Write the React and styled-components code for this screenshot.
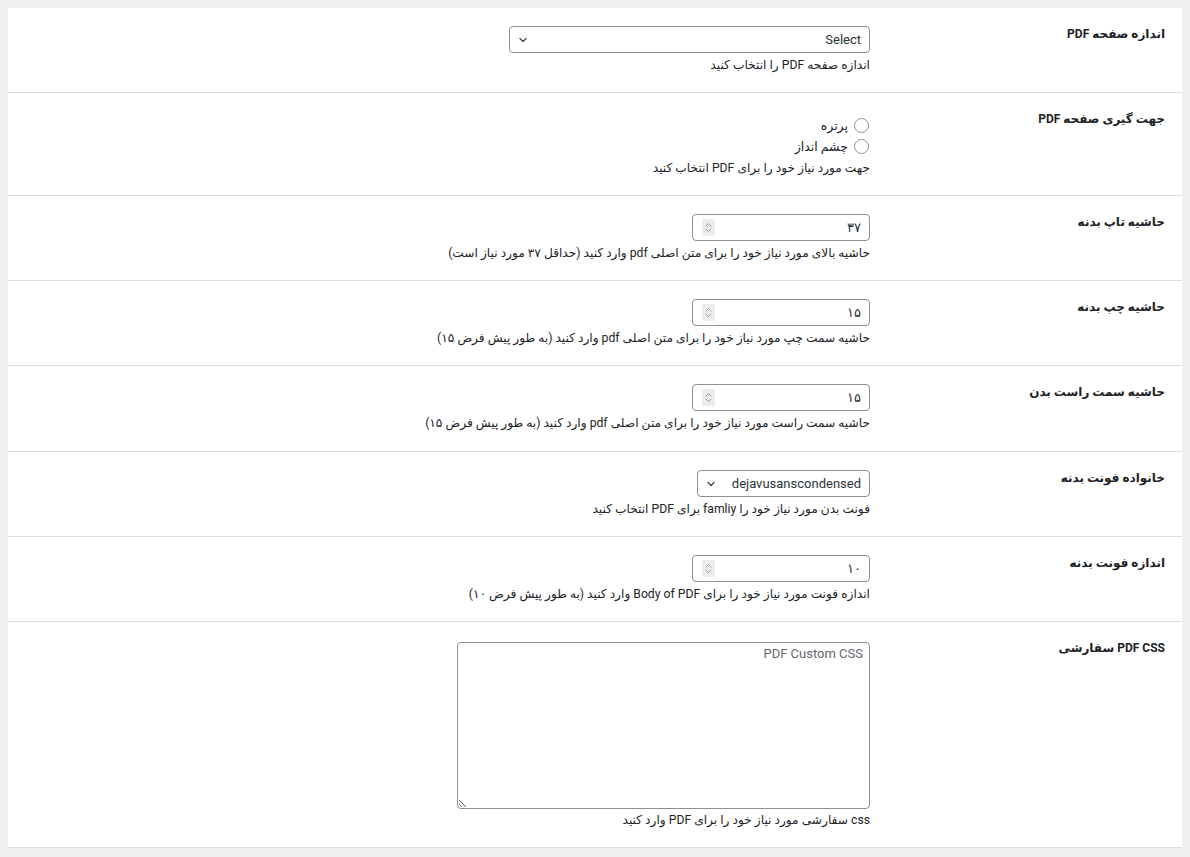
import React from 'react';
import styled, { createGlobalStyle } from 'styled-components';

const GlobalStyle = createGlobalStyle`
  html, body {
    margin: 0;
    padding: 0;
    background: #f0f0f1;
  }
  body {
    padding: 8px;
    font-family: Roboto, "DejaVu Sans", sans-serif;
    color: #1d2327;
  }
`;

const Panel = styled.div`
  direction: rtl;
  background: #fff;
`;

const Row = styled.div`
  display: grid;
  grid-template-columns: 302px 1fr;
  border-bottom: 1px solid #dcdcde;
`;

const Label = styled.div`
  padding: 17px 17px 0 0;
  font-size: 12px;
  font-weight: 700;
  line-height: 18px;
  color: #1d2327;
`;

const Field = styled.div`
  padding: ${(p) => p.$top || 18}px 10px ${(p) => p.$bottom || 17}px 10px;
  display: flex;
  flex-direction: column;
  align-items: flex-start;
`;

const Description = styled.p`
  margin: ${(p) => p.$gap || 2}px 0 0;
  font-size: 12.2px;
  line-height: 20px;
  color: #1d2327;
`;

const SelectBox = styled.div`
  box-sizing: border-box;
  width: ${(p) => p.$width}px;
  height: 27px;
  border: 1px solid #8c8f94;
  border-radius: 4px;
  display: flex;
  align-items: center;
  justify-content: space-between;
  padding: 0 8px;
  font-size: 13px;
  color: #2c3338;
  background: #fff;
`;

const NumberBox = styled.div`
  box-sizing: border-box;
  width: 178px;
  height: 27px;
  border: 1px solid #8c8f94;
  border-radius: 4px;
  display: flex;
  align-items: center;
  justify-content: space-between;
  padding: 0 8px 0 9px;
  background: #fff;
`;

const NumberValue = styled.span`
  font-size: 13px;
  color: #2c3338;
`;

const Spinner = styled.span`
  width: 13px;
  height: 17px;
  background: #ececec;
  border-radius: 2px;
  display: flex;
  align-items: center;
  justify-content: center;
`;

const RadioList = styled.div`
  margin-top: 4px;
  display: flex;
  flex-direction: column;
`;

const RadioItem = styled.label`
  display: flex;
  align-items: center;
  gap: 6px;
  height: 21px;
  font-size: 12.5px;
  color: #1d2327;
`;

const RadioCircle = styled.span`
  box-sizing: border-box;
  width: 15px;
  height: 15px;
  border: 1px solid #8c8f94;
  border-radius: 50%;
  background: #fff;
  margin-right: 1px;
`;

const TextArea = styled.textarea`
  box-sizing: border-box;
  width: 413px;
  height: 167px;
  margin-top: 1px;
  border: 1px solid #8c8f94;
  border-radius: 4px;
  padding: 2px 6px;
  font-family: Roboto, "DejaVu Sans", sans-serif;
  font-size: 13px;
  line-height: 18px;
  color: #2c3338;
  background: #fff;
  &::placeholder {
    color: #646970;
  }
`;

const Chevron = () => (
  <svg width="10" height="10" viewBox="0 0 10 10" fill="none">
    <path d="M2 3.5 L5 6.5 L8 3.5" stroke="#3c434a" strokeWidth="1.2" strokeLinecap="round" strokeLinejoin="round" />
  </svg>
);

const SpinIcon = () => (
  <svg width="7" height="11" viewBox="0 0 7 11" fill="none">
    <path d="M1 4 L3.5 1.5 L6 4 M1 7 L3.5 9.5 L6 7" stroke="#8c8f94" strokeWidth="0.9" strokeLinecap="round" strokeLinejoin="round" />
  </svg>
);

const NumberSetting = ({ label, value, description, bottom }) => (
  <Row>
    <Label>{label}</Label>
    <Field $bottom={bottom}>
      <NumberBox>
        <NumberValue>{value}</NumberValue>
        <Spinner>
          <SpinIcon />
        </Spinner>
      </NumberBox>
      <Description>{description}</Description>
    </Field>
  </Row>
);

const numberRows = [
  {
    label: 'حاشیه تاپ بدنه',
    value: '۳۷',
    description: 'حاشیه بالای مورد نیاز خود را برای متن اصلی pdf وارد کنید (حداقل ۳۷ مورد نیاز است)',
  },
  {
    label: 'حاشیه چپ بدنه',
    value: '۱۵',
    description: 'حاشیه سمت چپ مورد نیاز خود را برای متن اصلی pdf وارد کنید (به طور پیش فرض ۱۵)',
  },
  {
    label: 'حاشیه سمت راست بدن',
    value: '۱۵',
    description: 'حاشیه سمت راست مورد نیاز خود را برای متن اصلی pdf وارد کنید (به طور پیش فرض ۱۵)',
    bottom: 18,
  },
];

const App = () => (
  <>
    <GlobalStyle />
    <Panel>
      <Row>
        <Label>اندازه صفحه PDF</Label>
        <Field>
          <SelectBox $width={361}>
            <span>Select</span>
            <Chevron />
          </SelectBox>
          <Description>اندازه صفحه PDF را انتخاب کنید</Description>
        </Field>
      </Row>

      <Row>
        <Label>جهت گیری صفحه PDF</Label>
        <Field>
          <RadioList>
            <RadioItem>
              <RadioCircle />
              پرتره
            </RadioItem>
            <RadioItem>
              <RadioCircle />
              چشم انداز
            </RadioItem>
          </RadioList>
          <Description $gap={1}>جهت مورد نیاز خود را برای PDF انتخاب کنید</Description>
        </Field>
      </Row>

      {numberRows.map((item) => (
        <NumberSetting key={item.label} {...item} />
      ))}

      <Row>
        <Label>خانواده فونت بدنه</Label>
        <Field>
          <SelectBox $width={173}>
            <span>dejavusanscondensed</span>
            <Chevron />
          </SelectBox>
          <Description>فونت بدن مورد نیاز خود را famliy برای PDF انتخاب کنید</Description>
        </Field>
      </Row>

      <NumberSetting
        label="اندازه فونت بدنه"
        value="۱۰"
        description="اندازه فونت مورد نیاز خود را برای Body of PDF وارد کنید (به طور پیش فرض ۱۰)"
      />

      <Row>
        <Label>PDF CSS سفارشی</Label>
        <Field $top={19}>
          <TextArea placeholder="PDF Custom CSS" />
          <Description $gap={1}>css سفارشی مورد نیاز خود را برای PDF وارد کنید</Description>
        </Field>
      </Row>
    </Panel>
  </>
);

export default App;
